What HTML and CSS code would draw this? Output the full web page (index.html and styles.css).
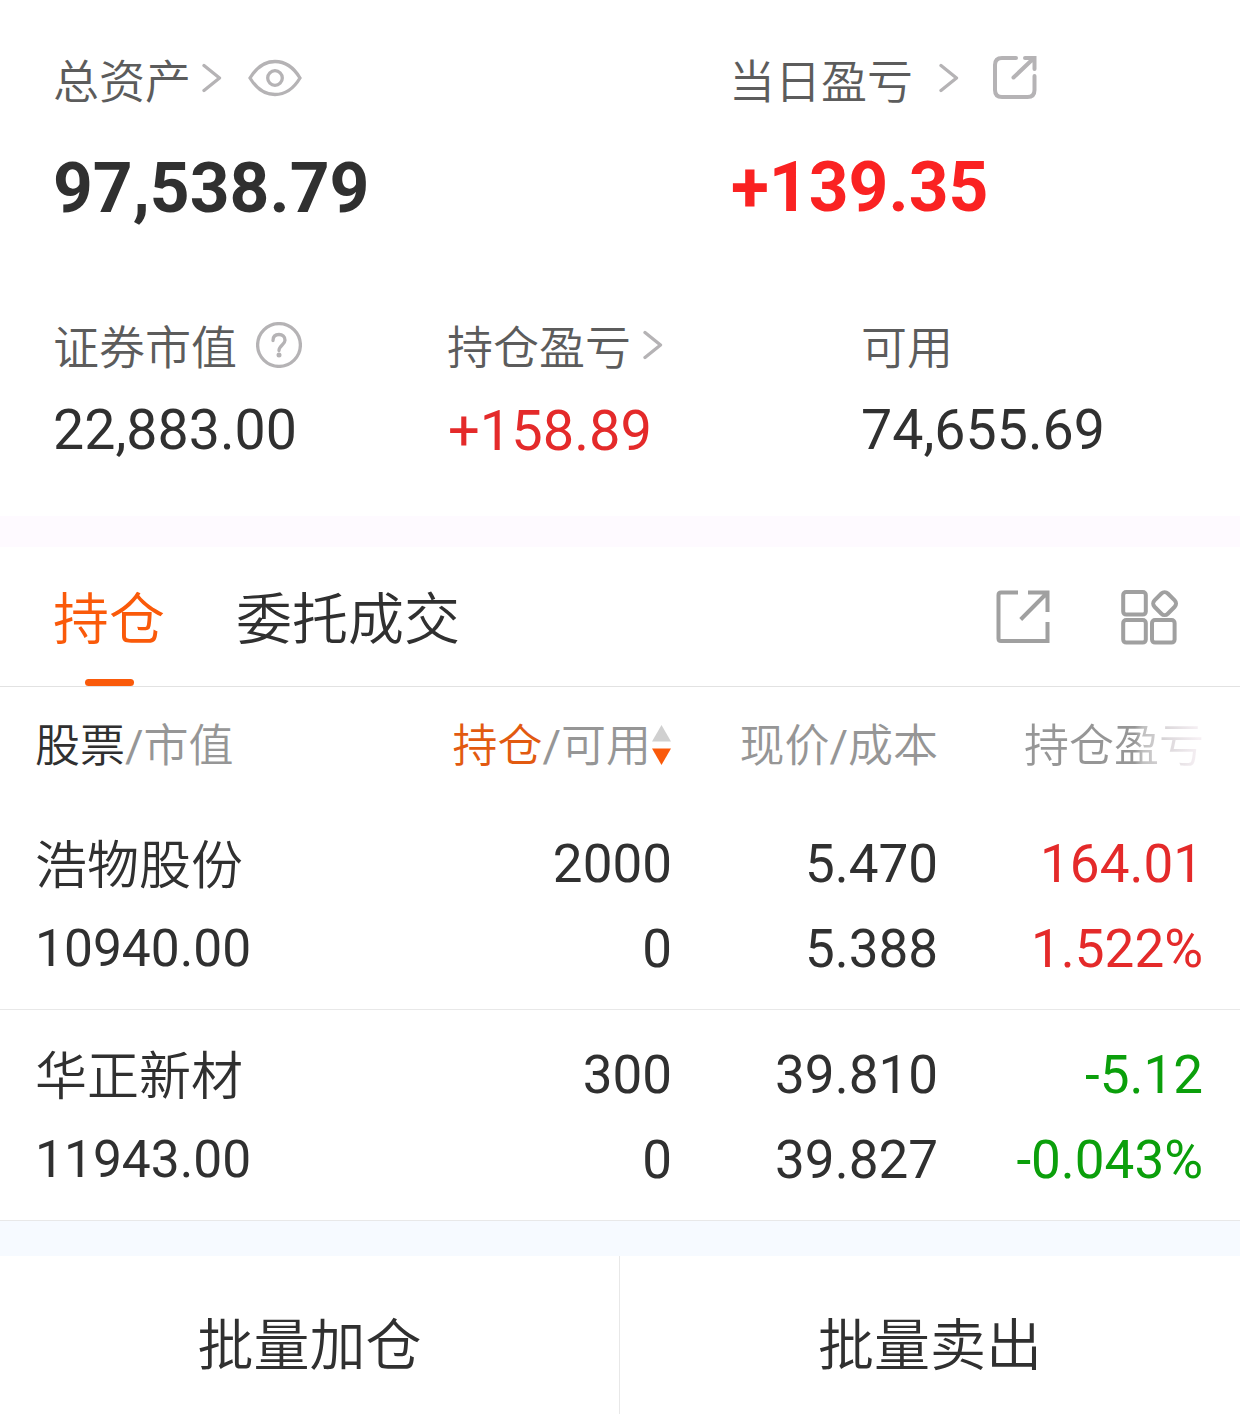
FILE: index.html
```html
<!DOCTYPE html>
<html lang="zh-CN">
<head>
<meta charset="utf-8">
<title>持仓</title>
<link rel="stylesheet" href="styles.css">
</head>
<body>
<main class="page">
  <section class="summary">
    <div class="totals">
      <div class="total">
        <div class="label">总资产
          <svg class="chevron chevron-near" width="20" height="30" viewBox="0 0 20 30"><path d="M2 2.500 17.500 15 2 27.500"/></svg>
          <svg class="eye" width="54" height="38" viewBox="0 0 54 38"><path d="M2 19C8 9 17 2.500 27 2.500S46 9 52 19C46 29 37 35.500 27 35.500S8 29 2 19Z"/><circle cx="27" cy="19" r="7.300"/></svg>
        </div>
        <div class="big">97,538.79</div>
      </div>
      <div class="total">
        <div class="label label-day">当日盈亏
          <svg class="chevron chevron-far" width="20" height="30" viewBox="0 0 20 30"><path d="M2 2.500 17.500 15 2 27.500"/></svg>
          <svg class="share" width="46" height="46" viewBox="0 0 46 46"><path d="M24 3H10Q3 3 3 10V35Q3 42 10 42H35.500Q42.500 42 42.500 35V21M33 3H42.500V14M42 3 21.500 22.500"/></svg>
        </div>
        <div class="big big-up">+139.35</div>
      </div>
    </div>
    <div class="details">
      <div class="detail">
        <div class="label">证券市值
          <svg class="help" width="46" height="46" viewBox="0 0 46 46"><circle cx="23" cy="23" r="21.400"/><path d="M17 18.500C17 14.500 19.500 12.500 23 12.500S29 14.700 29 18.200C29 22.500 23 23.500 23 28.500"/><circle class="dot" cx="23" cy="33" r="2.500"/></svg>
        </div>
        <div class="amount">22,883.00</div>
      </div>
      <div class="detail">
        <div class="label">持仓盈亏
          <svg class="chevron chevron-mid" width="20" height="30" viewBox="0 0 20 30"><path d="M2 2.500 17.500 15 2 27.500"/></svg>
        </div>
        <div class="amount amount-change up">+158.89</div>
      </div>
      <div class="detail">
        <div class="label">可用</div>
        <div class="amount">74,655.69</div>
      </div>
    </div>
  </section>

  <nav class="tabs">
    <div class="tab tab-active">持仓</div>
    <div class="tab">委托成交</div>
    <div class="tools">
      <svg width="54" height="54" viewBox="0 0 54 54"><path d="M22 2.500H5Q2.500 2.500 2.500 5V48.500Q2.500 51 5 51H51.500V32M32 2.500H51.500V22M51 3 24.700 29.500"/></svg>
      <svg width="60" height="58" viewBox="0 0 60 58"><rect x="3.200" y="4" width="22.600" height="22.600" rx="3"/><rect x="3.200" y="32" width="22.600" height="22.600" rx="3"/><rect x="32" y="32" width="22.600" height="22.600" rx="3"/><rect x="35.200" y="6.200" width="18.800" height="18.800" rx="4.500" transform="rotate(45 44.600 15.600)"/></svg>
    </div>
  </nav>

  <section class="table">
    <div class="row head">
      <div class="cell"><span class="ink">股票</span><span class="slash">/</span>市值</div>
      <div class="cell right"><span class="hot">持仓</span><span class="slash">/</span>可用<svg class="sort" width="19" height="40" viewBox="0 0 19 40"><path class="sort-up" d="M9.500 0 19 16.500H0Z"/><path class="sort-down" d="M0 23.500H19L9.500 40Z"/></svg></div>
      <div class="cell right">现价<span class="slash">/</span>成本</div>
      <div class="cell right fade">持仓盈亏</div>
    </div>
    <div class="row stock">
      <div class="cell"><div class="name">浩物股份</div><div class="value">10940.00</div></div>
      <div class="cell right"><div>2000</div><div>0</div></div>
      <div class="cell right"><div>5.470</div><div>5.388</div></div>
      <div class="cell right up"><div>164.01</div><div>1.522%</div></div>
    </div>
    <div class="row stock">
      <div class="cell"><div class="name">华正新材</div><div class="value">11943.00</div></div>
      <div class="cell right"><div>300</div><div>0</div></div>
      <div class="cell right"><div>39.810</div><div>39.827</div></div>
      <div class="cell right down"><div>-5.12</div><div>-0.043%</div></div>
    </div>
  </section>

  <footer class="actions">
    <div class="action">批量加仓</div>
    <div class="action">批量卖出</div>
  </footer>
</main>
</body>
</html>
```

FILE: styles.css
```css
* { box-sizing: border-box; }

body {
  margin: 0;
  background: #fff;
  color: #303030;
  font-family: "Noto Sans CJK SC", sans-serif;
  font-weight: 350;
  white-space: nowrap;
}

.page {
  display: flex;
  flex-direction: column;
  width: 1240px;
  height: 1414px;
  overflow: hidden;
}

.summary, .tabs, .table { flex: none; }

svg { flex: none; fill: none; }

/* account summary */
.summary {
  height: 547px;
  padding-top: 48px;
  border-bottom: 31px solid #fefaff;
}

.totals {
  display: grid;
  grid-template-columns: 678px 1fr;
  padding-left: 53px;
}

.label {
  display: flex;
  align-items: center;
  height: 60px;
  font-size: 46px;
  line-height: 59px;
  color: #5c5c5c;
}

.label svg { stroke: #b5b3b5; stroke-width: 3.3; }
.label-day { margin-left: -2px; }
.chevron { stroke-linecap: round; stroke-linejoin: round; }
.chevron-near { margin-left: 11px; }
.chevron-mid { margin-left: 12px; }
.chevron-far { margin-left: 26px; }
.eye { margin-left: 26px; }
.share { margin-left: 33px; stroke-linecap: round; }
.label .share { stroke-width: 4; }
.help { margin-left: 19px; stroke-linecap: round; }
.label .help .dot { fill: #b5b3b5; stroke: none; }

.big {
  margin-top: 41px;
  font: 700 69.500px/80px Roboto, sans-serif;
}

.big-up { margin-top: 40px; color: #fa2222; }

.details {
  display: grid;
  grid-template-columns: 394px 414px 1fr;
  margin-top: 85px;
  padding-left: 53px;
}

.details svg { margin-top: 2px; }

.amount {
  margin-top: 22px;
  font: 400 55.500px/70px Roboto, sans-serif;
}

.amount-change { padding-left: 1px; font-size: 56px; }

.up { color: #e42a2a; }
.down { color: #0b9f0b; }

/* tabs */
.tabs {
  display: flex;
  gap: 71px;
  height: 140px;
  padding: 0 60px 0 53px;
  border-bottom: 1px solid #e2e2e2;
}

.tab {
  height: 139px;
  font-size: 56px;
  line-height: 136px;
}

.tab-active { color: #fa5a0a; }

.tab-active::after {
  content: "";
  display: block;
  width: 49px;
  height: 7px;
  margin: -4px auto 0;
  border-radius: 4px;
  background: #fa5a0a;
}

.tools {
  display: flex;
  align-items: center;
  gap: 70px;
  margin-left: auto;
}

.tools svg { stroke: #a0a0a0; stroke-width: 4; }

/* holdings table */
.row {
  display: grid;
  grid-template-columns: 350px 287px 266px 265px;
  padding-left: 35px;
}

.head {
  height: 112px;
  padding-top: 4px;
  font-family: Roboto, "Noto Sans CJK SC", sans-serif;
  font-size: 45px;
  line-height: 112px;
  color: #969696;
}

.right { text-align: right; }
.head .right { display: flex; justify-content: flex-end; align-items: center; }
.ink { color: #303030; }
.hot { color: #e25a10; }
.slash { font-weight: 400; }
.sort { margin: -4px 1px 0 1px; }
.sort-up { fill: #d0d0d0; }
.sort-down { fill: #fa5a0a; }

.fade {
  margin-right: -1px;
  background: linear-gradient(90deg, #969696 74%, #c0c0c0 77%, #dedadd 87%, #f6f0f4 98%);
  background-clip: text;
  color: transparent;
}

.stock {
  height: 211px;
  padding-top: 23px;
  border-bottom: 1px solid #e8e8e8;
  font: 400 53px/85px Roboto, sans-serif;
}

.name {
  height: 84px;
  font: 350 52px/79px "Noto Sans CJK SC", sans-serif;
}

.value { font-size: 51.500px; }

/* batch actions */
.actions {
  display: grid;
  grid-template-columns: 620px 620px;
  flex: none;
  height: 193px;
  border-top: 35px solid #f6faff;
}

.action {
  height: 158px;
  font-size: 56px;
  line-height: 170px;
  text-align: center;
}

.action:first-child { border-right: 1px solid #e8e8e8; }
```
